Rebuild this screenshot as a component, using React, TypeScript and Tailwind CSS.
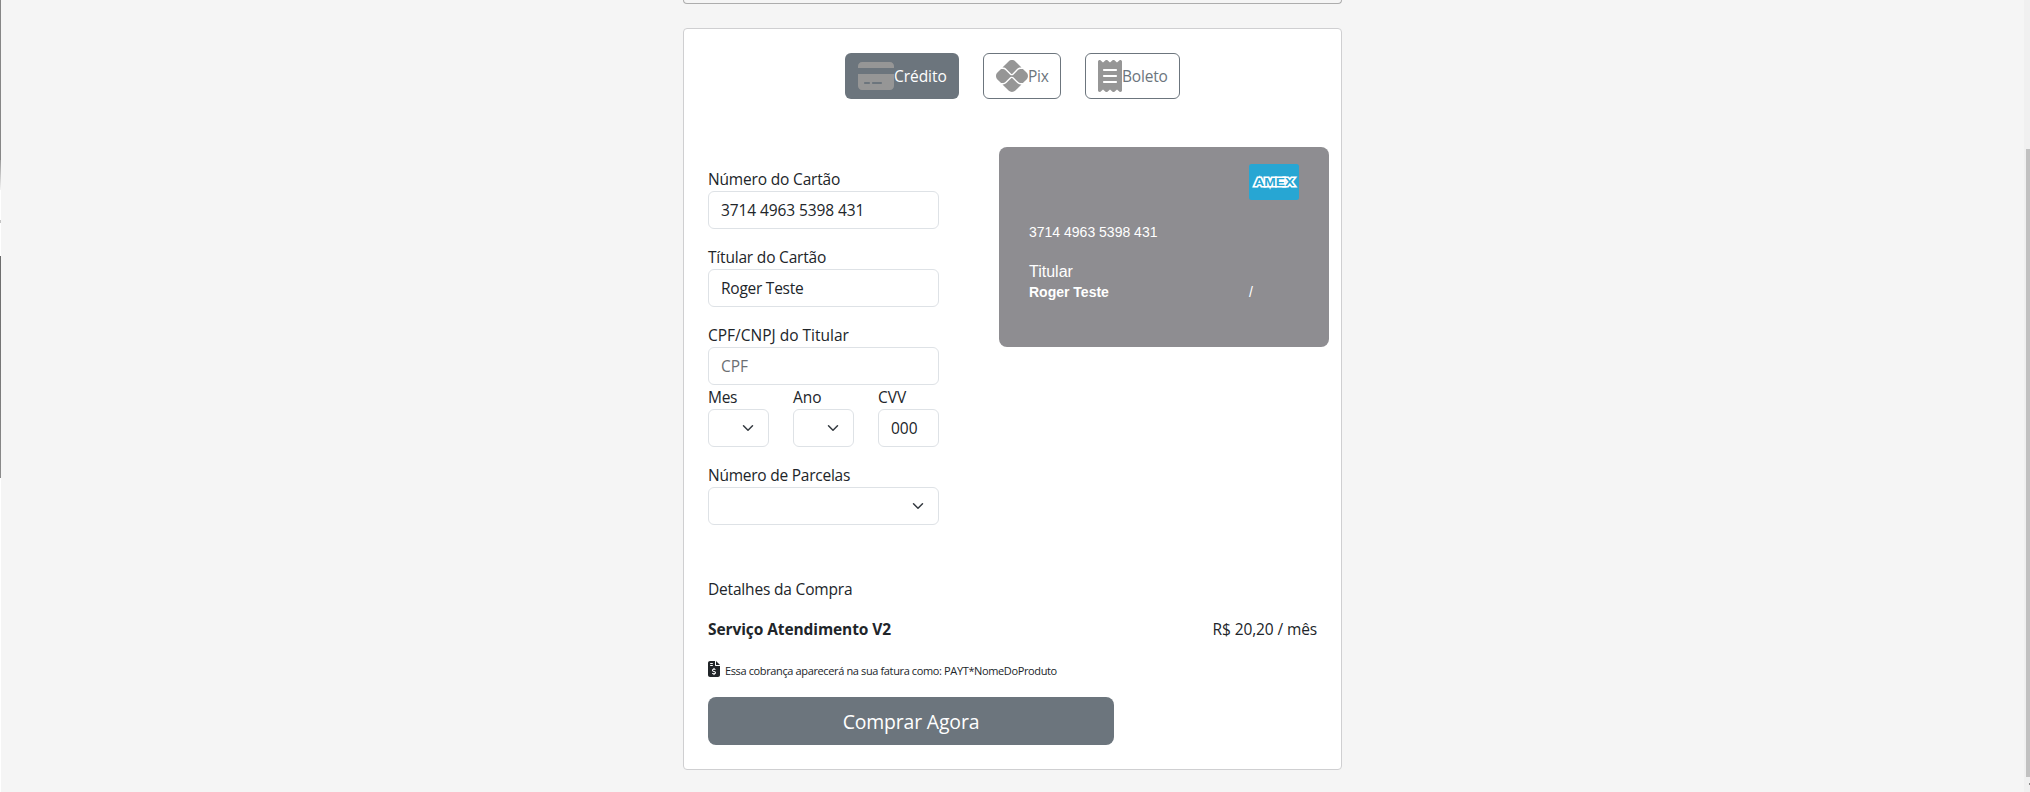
import React from "react";
import { FaCreditCard, FaPix, FaReceipt, FaFileInvoiceDollar } from "react-icons/fa6";

function Chevron() {
  return (
    <svg viewBox="0 0 16 16" className="size-3 shrink-0" fill="none" stroke="#343a40" strokeLinecap="round" strokeLinejoin="round" strokeWidth="2">
      <path d="m2 5 6 6 6-6" />
    </svg>
  );
}

function Select({ label, className = "" }: { label: React.ReactNode; className?: string }) {
  return (
    <div className={className}>
      <div className="h-6 whitespace-nowrap">{label}</div>
      <div className="flex h-[38px] items-center justify-end rounded-md border border-[#dee2e6] pr-[14px]">
        <Chevron />
      </div>
    </div>
  );
}

function Field({ label, value, muted = false }: { label: React.ReactNode; value: React.ReactNode; muted?: boolean }) {
  return (
    <div>
      <div className="h-6 whitespace-nowrap">{label}</div>
      <div className={`flex h-[38px] items-center rounded-md border border-[#dee2e6] px-3 whitespace-nowrap ${muted ? "text-[#6c6f73]" : ""}`}>
        {value}
      </div>
    </div>
  );
}

export default function App() {
  return (
    <div className="flex h-[792px] w-[2030px] overflow-hidden bg-[#f5f5f5] font-['Open_Sans',sans-serif] text-[15.5px] leading-6 text-[#212529]">
      <div className="flex w-px flex-col">
        <div className="h-[160px] bg-[#868686]" />
        <div className="h-[30px] bg-linear-to-b from-[#999999] to-[#f5f5f5]" />
        <div className="h-[30px] bg-white" />
        <div className="h-[3px] bg-[#c4c4c4]" />
        <div className="h-[33px] bg-white" />
        <div className="h-[222px] bg-linear-to-b from-[#6c6c6c] via-[#777777] to-[#8c8c8c]" />
        <div className="flex-1 bg-white" />
      </div>
      <main className="flex flex-1 flex-col pl-[682px]">
        <div className="h-1 w-[659px] shrink-0 rounded-b-[4px] border border-t-0 border-[#adadad]" />
        <section className="mt-6 flex h-[742px] w-[659px] shrink-0 flex-col rounded-[4px] border border-[#cfcfd1] bg-white px-6 pt-6">
          <div className="flex h-[46px] justify-center gap-6 text-[#6c757d]">
            <div className="flex w-[114px] items-center rounded-md bg-[#6c757d] pl-[13px] text-white">
              <FaCreditCard className="h-8 w-9 shrink-0 text-[#969696]" />
              <span className="tracking-[-0.05px]">Crédito</span>
            </div>
            <div className="flex w-[78px] items-center rounded-md border border-[#6c757d] pl-3">
              <FaPix className="size-8 shrink-0 text-[#969696]" />
              <span className="tracking-[-0.3px]">Pix</span>
            </div>
            <div className="flex w-[95px] items-center rounded-md border border-[#6c757d] pl-3">
              <FaReceipt className="h-8 w-6 shrink-0 text-[#969696]" />
              <span className="tracking-[-0.2px]">Boleto</span>
            </div>
          </div>
          <div className="mt-12 flex h-[378px]">
            <div className="mt-5 flex w-[231px] shrink-0 flex-col">
              <Field
                label={<span className="tracking-[-0.17px]">Número do Cartão</span>}
                value={<span className="tracking-[-0.1px]">3714 4963 5398 431</span>}
              />
              <div className="mt-4">
                <Field
                  label={<span className="tracking-[-0.19px]">Títular do Cartão</span>}
                  value={<span className="tracking-[-0.25px]">Roger Teste</span>}
                />
              </div>
              <div className="mt-4">
                <Field label="CPF/CNPJ do Titular" value="CPF" muted />
              </div>
              <div className="grid grid-cols-3 gap-6">
                <Select label={<span className="tracking-[-0.3px]">Mes</span>} />
                <Select label="Ano" />
                <Field label="CVV" value="000" />
              </div>
              <Select label={<span className="tracking-[-0.24px]">Número de Parcelas</span>} className="mt-4" />
            </div>
            <div className="ml-[60px] flex h-[200px] w-[330px] shrink-0 flex-col rounded-[8px] bg-[#8e8d91] px-[30px] pt-[17px] font-['Liberation_Sans',Arial,sans-serif] text-[14px] text-white">
              <svg width="50" height="36" viewBox="0 0 50 36" className="shrink-0 self-end">
                <rect width="50" height="36" rx="2.5" fill="#27a6d3" />
                <text x="25.2" y="22.2" textAnchor="middle" textLength="40" lengthAdjust="spacingAndGlyphs" fontFamily="Liberation Sans, Arial, sans-serif" fontWeight="700" fontSize="11.5" fill="#27a6d3" stroke="#fff" strokeWidth="3" paintOrder="stroke">AMEX</text>
              </svg>
              <div className="mt-[22px] h-5 leading-5">3714 4963 5398 431</div>
              <div className="mt-5 h-5 text-[16px] leading-5">Titular</div>
              <div className="flex h-5 leading-5">
                <b className="w-[220px]">Roger Teste</b>
                <span>/</span>
              </div>
            </div>
          </div>
          <div className="mt-[52px] h-6 tracking-[-0.18px]">Detalhes da Compra</div>
          <div className="mt-4 flex h-6 justify-between">
            <b className="tracking-[-0.09px]">Serviço Atendimento V2</b>
            <span className="tracking-[-0.12px]">R$ 20,20 / mês</span>
          </div>
          <div className="mt-4 flex h-6 items-center gap-[5px]">
            <FaFileInvoiceDollar className="h-4 w-3 shrink-0" />
            <span className="pt-[3px] text-[11px] tracking-[-0.37px]">Essa cobrança aparecerá na sua fatura como: PAYT*NomeDoProduto</span>
          </div>
          <div className="mt-4 flex h-12 w-[406px] items-center justify-center rounded-[8px] bg-[#6c757d] pt-[2px] text-[19.4px] tracking-[-0.15px] text-white">Comprar Agora</div>
        </section>
      </main>
      <aside className="flex w-1.5 flex-col bg-[#f0f0f0] pl-[2px]">
        <div className="mt-[149px] h-[628px] bg-[#c1c1c1]" />
        <div className="mt-[6px] ml-auto h-[2px] w-px bg-[#8a8a8a]" />
      </aside>
    </div>
  );
}
